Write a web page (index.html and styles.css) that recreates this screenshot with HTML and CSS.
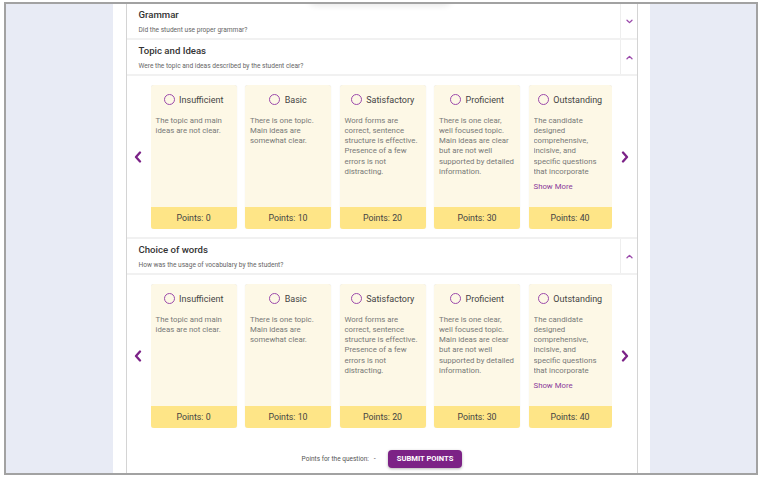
FILE: index.html
```html
<!DOCTYPE html>
<html>
<head>
<meta charset="utf-8">
<link rel="stylesheet" href="styles.css">
</head>
<body>
<div class="frame">
  <div class="topshadow"></div>
  <div class="side"></div>
  <div class="main">
    <div class="panel">
      <div class="qhead">
        <div class="qtext">
          <div class="qtitle">Grammar</div>
          <div class="qsub">Did the student use proper grammar?</div>
        </div>
        <div class="qtoggle">
          <svg width="7" height="5" viewBox="0 0 7 5"><path d="M1 1.2 L3.5 3.6 L6 1.2" fill="none" stroke="#9b4aab" stroke-width="1.3" stroke-linecap="round" stroke-linejoin="round"/></svg>
        </div>
      </div>
      <div class="qhead">
        <div class="qtext">
          <div class="qtitle">Topic and Ideas</div>
          <div class="qsub">Were the topic and ideas described by the student clear?</div>
        </div>
        <div class="qtoggle">
          <svg width="7" height="5" viewBox="0 0 7 5"><path d="M1 3.8 L3.5 1.4 L6 3.8" fill="none" stroke="#9b4aab" stroke-width="1.3" stroke-linecap="round" stroke-linejoin="round"/></svg>
        </div>
      </div>
      <div class="carousel divided">
        <div class="arrow left">
          <svg width="8" height="12" viewBox="0 0 8 12"><path d="M6 1.5 L2 6 L6 10.5" fill="none" stroke="#7b2287" stroke-width="2.3" stroke-linecap="round" stroke-linejoin="round"/></svg>
        </div>
        <div class="track">
          <div class="card">
            <div class="opt"><span class="radio"></span><span class="label">Insufficient</span></div>
            <div class="desc">The topic and main ideas are not clear.</div>
            <div class="pts">Points: 0</div>
          </div>
          <div class="card">
            <div class="opt"><span class="radio"></span><span class="label">Basic</span></div>
            <div class="desc">There is one topic. Main ideas are somewhat clear.</div>
            <div class="pts">Points: 10</div>
          </div>
          <div class="card">
            <div class="opt"><span class="radio"></span><span class="label">Satisfactory</span></div>
            <div class="desc">Word forms are correct, sentence structure is effective. Presence of a few errors is not distracting.</div>
            <div class="pts">Points: 20</div>
          </div>
          <div class="card">
            <div class="opt"><span class="radio"></span><span class="label">Proficient</span></div>
            <div class="desc">There is one clear, well focused topic. Main ideas are clear but are not well supported by detailed information.</div>
            <div class="pts">Points: 30</div>
          </div>
          <div class="card">
            <div class="opt"><span class="radio"></span><span class="label">Outstanding</span></div>
            <div class="desc"><div class="clip">The candidate designed comprehensive, incisive, and specific questions that incorporate</div><div class="more">Show More</div></div>
            <div class="pts">Points: 40</div>
          </div>
        </div>
        <div class="arrow right">
          <svg width="8" height="12" viewBox="0 0 8 12"><path d="M2 1.5 L6 6 L2 10.5" fill="none" stroke="#7b2287" stroke-width="2.3" stroke-linecap="round" stroke-linejoin="round"/></svg>
        </div>
      </div>
      <div class="qhead">
        <div class="qtext">
          <div class="qtitle">Choice of words</div>
          <div class="qsub">How was the usage of vocabulary by the student?</div>
        </div>
        <div class="qtoggle">
          <svg width="7" height="5" viewBox="0 0 7 5"><path d="M1 3.8 L3.5 1.4 L6 3.8" fill="none" stroke="#9b4aab" stroke-width="1.3" stroke-linecap="round" stroke-linejoin="round"/></svg>
        </div>
      </div>
      <div class="carousel">
        <div class="arrow left">
          <svg width="8" height="12" viewBox="0 0 8 12"><path d="M6 1.5 L2 6 L6 10.5" fill="none" stroke="#7b2287" stroke-width="2.3" stroke-linecap="round" stroke-linejoin="round"/></svg>
        </div>
        <div class="track">
          <div class="card">
            <div class="opt"><span class="radio"></span><span class="label">Insufficient</span></div>
            <div class="desc">The topic and main ideas are not clear.</div>
            <div class="pts">Points: 0</div>
          </div>
          <div class="card">
            <div class="opt"><span class="radio"></span><span class="label">Basic</span></div>
            <div class="desc">There is one topic. Main ideas are somewhat clear.</div>
            <div class="pts">Points: 10</div>
          </div>
          <div class="card">
            <div class="opt"><span class="radio"></span><span class="label">Satisfactory</span></div>
            <div class="desc">Word forms are correct, sentence structure is effective. Presence of a few errors is not distracting.</div>
            <div class="pts">Points: 20</div>
          </div>
          <div class="card">
            <div class="opt"><span class="radio"></span><span class="label">Proficient</span></div>
            <div class="desc">There is one clear, well focused topic. Main ideas are clear but are not well supported by detailed information.</div>
            <div class="pts">Points: 30</div>
          </div>
          <div class="card">
            <div class="opt"><span class="radio"></span><span class="label">Outstanding</span></div>
            <div class="desc"><div class="clip">The candidate designed comprehensive, incisive, and specific questions that incorporate</div><div class="more">Show More</div></div>
            <div class="pts">Points: 40</div>
          </div>
        </div>
        <div class="arrow right">
          <svg width="8" height="12" viewBox="0 0 8 12"><path d="M2 1.5 L6 6 L2 10.5" fill="none" stroke="#7b2287" stroke-width="2.3" stroke-linecap="round" stroke-linejoin="round"/></svg>
        </div>
      </div>
      <div class="footer">
        <span class="ptlabel">Points for the question:</span>
        <span class="ptval">-</span>
        <button class="submit">SUBMIT POINTS</button>
      </div>
    </div>
  </div>
  <div class="side"></div>
</div>
</body>
</html>
```

FILE: styles.css
```css
* { box-sizing: border-box; }
html, body { margin: 0; padding: 0; background: #ffffff; }
body {
  padding: 2px 0 0 4px;
  font-family: Roboto, "Liberation Sans", Arial, sans-serif;
}
.frame {
  position: relative;
  width: 754px;
  height: 473px;
  border: 2px solid #a2a2a2;
  display: flex;
  overflow: hidden;
  background: #ffffff;
}
.topshadow {
  position: absolute;
  left: 301px;
  top: -20px;
  width: 146px;
  height: 20px;
  border-radius: 10px;
  box-shadow: 0 2px 6px rgba(0, 0, 0, 0.09);
}
.side {
  flex: 0 0 107px;
  background: #e8ebf5;
}
.side:last-child { flex-basis: 106px; }
.main {
  flex: 0 0 537px;
  padding: 0 12px 0 13px;
  background: #ffffff;
}
.panel {
  height: 100%;
  border-left: 1.5px solid #d4d4d4;
  border-right: 1.5px solid #d4d4d4;
}
.qhead {
  display: flex;
  height: 36px;
  border-bottom: 2px solid #f1f1f1;
}
.qtext {
  flex: 1;
  padding: 5px 0 0 11.5px;
}
.qtitle {
  font-size: 9.6px;
  font-weight: 500;
  line-height: 12px;
  color: #333333;
}
.qsub {
  margin-top: 4px;
  font-size: 6.6px;
  line-height: 10px;
  color: #666666;
}
.qtoggle {
  flex: 0 0 17px;
  border-left: 1px solid #eeeeee;
  display: flex;
  align-items: center;
  justify-content: center;
}
.carousel {
  display: flex;
  align-items: center;
  padding: 8.5px 0;
}
.carousel.divided { border-bottom: 2px solid #f1f1f1; }
.arrow {
  display: flex;
  align-items: center;
  justify-content: center;
  height: 144px;
}
.arrow.left { flex: 0 0 23.5px; padding-right: 2px; }
.arrow.right { flex: 1; padding-left: 1px; }
.track {
  flex: 0 0 461px;
  display: flex;
  gap: 8.5px;
  overflow: hidden;
}
.card {
  flex: 0 0 86px;
  height: 144px;
  display: flex;
  flex-direction: column;
  background: #fdf8e6;
  border-radius: 3px;
  overflow: hidden;
  box-shadow: 0 0 1px rgba(0, 0, 0, 0.14);
}
.card:last-child { flex-basis: 83px; }
.opt {
  display: flex;
  align-items: center;
  justify-content: center;
  gap: 4.5px;
  margin-top: 9px;
  height: 12px;
}
.radio {
  width: 11px;
  height: 11px;
  border: 1.5px solid #9c4aab;
  border-radius: 50%;
}
.label {
  font-size: 9px;
  color: #444444;
}
.desc {
  flex: 1;
  margin-top: 10px;
  padding: 0 5px;
  font-size: 7.8px;
  line-height: 10.3px;
  color: #787878;
}
.card:last-child .desc { padding-right: 10px; }
.clip {
  max-height: 62px;
  overflow: hidden;
}
.more {
  margin-top: 5px;
  color: #8b3a9b;
}
.pts {
  height: 21.5px;
  display: flex;
  align-items: center;
  justify-content: center;
  background: #fee587;
  font-size: 8.8px;
  color: #444444;
}
.footer {
  display: flex;
  align-items: center;
  justify-content: center;
  padding-top: 14px;
}
.ptlabel {
  font-size: 6.5px;
  color: #555555;
}
.ptval {
  margin-left: 5px;
  font-size: 7px;
  color: #555555;
}
.submit {
  margin-left: 12px;
  height: 17.5px;
  padding: 0 9px;
  border: none;
  border-radius: 4px;
  background: #7c2286;
  color: #ffffff;
  font-family: Roboto, "Liberation Sans", Arial, sans-serif;
  font-size: 7.6px;
  font-weight: 700;
  box-shadow: 0 1px 3px rgba(0, 0, 0, 0.3);
}
```
